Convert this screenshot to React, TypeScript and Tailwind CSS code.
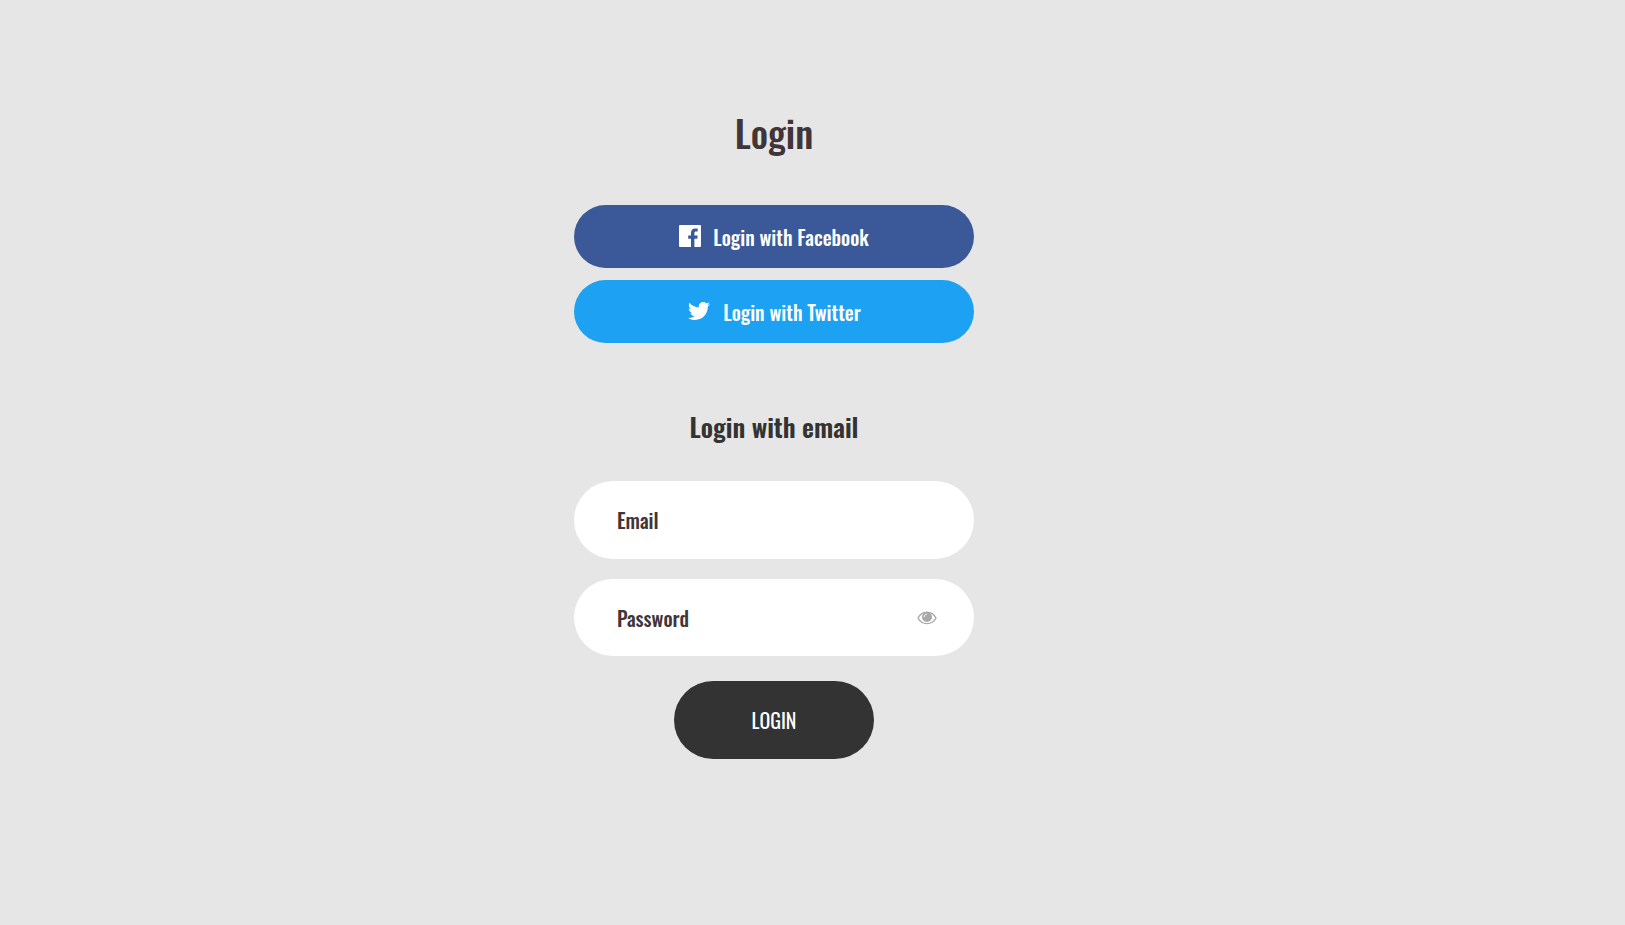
import { useState } from "react";
import type { ReactNode } from "react";
import { IoLogoTwitter } from "react-icons/io";

function FacebookIcon() {
  return (
    <svg viewBox="0 0 22 22" className="size-[22px]" fill="currentColor" aria-hidden="true">
      <path d="M21 0H1a1 1 0 0 0-1 1v20a1 1 0 0 0 1 1h11v-8.200H9.200v-3.300H12V8c0-2.900 1.700-4.400 4.200-4.400 1.200 0 2.200.1 2.500.1v2.900h-1.700c-1.300 0-1.600.7-1.600 1.600v2.300h3.300l-.4 3.300h-2.900V22H21a1 1 0 0 0 1-1V1a1 1 0 0 0-1-1z" />
    </svg>
  );
}

function EyeIcon() {
  return (
    <svg viewBox="0 0 20 14" className="h-[14px] w-5" fill="none" aria-hidden="true">
      <path
        d="M1 7C3 3.200 6.200 1.200 10 1.200S17 3.200 19 7c-2 3.800-5.200 5.600-9 5.600S3 10.800 1 7z"
        stroke="currentColor"
        strokeWidth="1.4"
        strokeLinejoin="round"
      />
      <circle cx="10" cy="6" r="5" fill="currentColor" />
      <path d="M7.200 5.600C7.300 4.200 8.200 3.300 9.600 3.100" stroke="#fff" strokeWidth="1" strokeLinecap="round" />
    </svg>
  );
}

function SocialButton({ color, icon, children }: { color: string; icon: ReactNode; children: ReactNode }) {
  return (
    <button
      type="button"
      className={`flex h-[63px] w-full cursor-pointer items-center justify-center gap-3 rounded-full text-xl font-medium text-white ${color}`}
    >
      <span className="pb-0.5">{icon}</span>
      <span>{children}</span>
    </button>
  );
}

const fieldClass =
  "block w-full rounded-full bg-white px-[43px] text-xl font-medium text-[#403538] outline-none placeholder:text-[#403538] placeholder:opacity-100";

export default function App() {
  const [visible, setVisible] = useState(false);

  return (
    <main className="flex min-h-screen justify-center bg-[#e6e6e6] px-4 pt-[108px] pb-10 font-[Oswald,'Liberation_Sans_Narrow','Liberation_Sans',sans-serif] md:pr-[93px]">
      <form className="flex w-full max-w-[400px] flex-col items-center" onSubmit={(e) => e.preventDefault()}>
        <h1 className="text-[38px] leading-[48px] font-medium text-[#403538]">Login</h1>

        <div className="mt-[49px] flex w-full flex-col gap-3">
          <SocialButton color="bg-[#3b5998]" icon={<FacebookIcon />}>
            Login with Facebook
          </SocialButton>
          <SocialButton color="bg-[#1da1f2]" icon={<IoLogoTwitter className="size-6" />}>
            Login with Twitter
          </SocialButton>
        </div>

        <h2 className="mt-16 text-[26px] leading-[40px] font-semibold text-[#333333]">Login with email</h2>

        <div className="mt-[34px] flex w-full flex-col gap-5">
          <input type="email" aria-label="Email" placeholder="Email" className={`h-[78px] ${fieldClass}`} />
          <div className="relative">
            <input
              type={visible ? "text" : "password"}
              aria-label="Password"
              placeholder="Password"
              className={`h-[77px] ${fieldClass}`}
            />
            <button
              type="button"
              aria-label="Show password"
              onClick={() => setVisible(!visible)}
              className="absolute inset-y-0 right-[37px] flex cursor-pointer items-center text-[#a8a8a8]"
            >
              <EyeIcon />
            </button>
          </div>
        </div>

        <button
          type="submit"
          className="mt-[25px] h-[78px] w-[200px] cursor-pointer rounded-full bg-[#333333] text-xl text-white"
        >
          LOGIN
        </button>
      </form>
    </main>
  );
}
